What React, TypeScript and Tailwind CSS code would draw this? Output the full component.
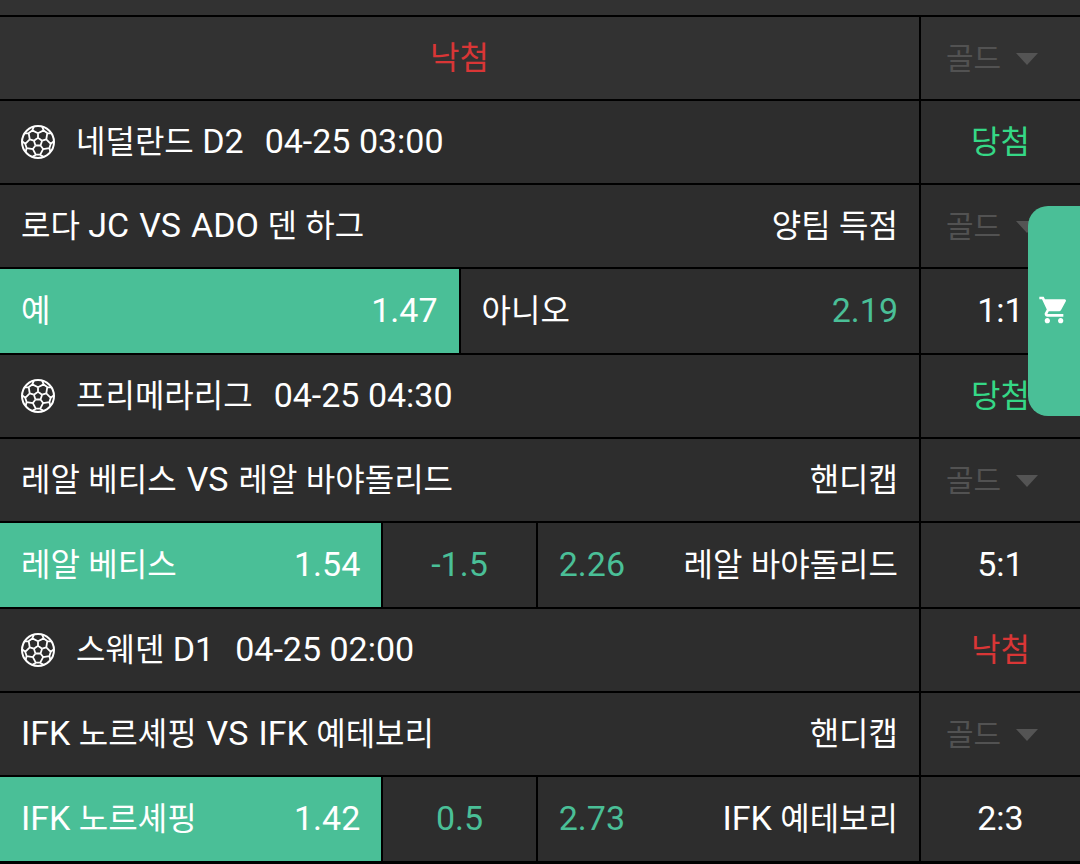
import React, { useState } from 'react';
import { MdShoppingCart } from 'react-icons/md';

interface Option {
  name?: string;
  odds: string;
}

interface Bet {
  id: number;
  league: string;
  date: string;
  won: boolean;
  home: string;
  away: string;
  market: string;
  options: Option[];
  score: string;
}

const bets: Bet[] = [
  {
    id: 1,
    league: '네덜란드 D2',
    date: '04-25 03:00',
    won: true,
    home: '로다 JC',
    away: 'ADO 덴 하그',
    market: '양팀 득점',
    options: [{ name: '예', odds: '1.47' }, { name: '아니오', odds: '2.19' }],
    score: '1:1',
  },
  {
    id: 2,
    league: '프리메라리그',
    date: '04-25 04:30',
    won: true,
    home: '레알 베티스',
    away: '레알 바야돌리드',
    market: '핸디캡',
    options: [{ name: '레알 베티스', odds: '1.54' }, { odds: '-1.5' }, { name: '레알 바야돌리드', odds: '2.26' }],
    score: '5:1',
  },
  {
    id: 3,
    league: '스웨덴 D1',
    date: '04-25 02:00',
    won: false,
    home: 'IFK 노르셰핑',
    away: 'IFK 예테보리',
    market: '핸디캡',
    options: [{ name: 'IFK 노르셰핑', odds: '1.42' }, { odds: '0.5' }, { name: 'IFK 예테보리', odds: '2.73' }],
    score: '2:3',
  },
];

// Hangul is set a little smaller than the Latin letters next to it
function Label({ text }: { text: string }) {
  const parts = text.split(/([가-힣]+)/).filter(Boolean);
  return (
    <span className="whitespace-pre">
      {parts.map((part, i) => (
        <span key={i} className={/[가-힣]/.test(part) ? 'text-[32px]' : ''}>{part}</span>
      ))}
    </span>
  );
}

function point(radius: number, degrees: number) {
  const a = ((degrees - 90) * Math.PI) / 180;
  return `${(18 + radius * Math.cos(a)).toFixed(2)} ${(18 + radius * Math.sin(a)).toFixed(2)}`;
}

// Central pentagon, a spoke from each corner and the seams round it
const seams = [0, 72, 144, 216, 288]
  .map(d => [
    `M${point(4.3, d)}L${point(4.3, d + 72)}`,
    `M${point(4.3, d)}L${point(8.7, d)}`,
    `M${point(16, d - 15)}L${point(12.9, d - 26)}L${point(8.7, d)}L${point(12.9, d + 26)}L${point(16, d + 15)}`,
    `M${point(12.9, d + 26)}L${point(12.9, d + 46)}`,
  ].join(''))
  .join('');

function SoccerBall() {
  return (
    <svg viewBox="0 0 36 36" className="size-9 shrink-0" fill="none" stroke="currentColor" aria-hidden="true">
      <circle cx="18" cy="18" r="16" strokeWidth="2" />
      <path d={seams} strokeWidth="1.8" strokeLinejoin="round" />
    </svg>
  );
}

function GoldSelect({ label }: { label: string }) {
  return (
    <div className="relative flex items-center pt-0.5 pl-[25px]">
      <select
        disabled
        aria-label={label}
        className="w-full appearance-none bg-transparent text-[30px] leading-10 text-[#525252] opacity-100"
      >
        <option>골드</option>
      </select>
      <svg viewBox="0 0 22 12" className="pointer-events-none absolute right-[42px] h-3 w-[22px] fill-[#545454]" aria-hidden="true">
        <path d="M0 0H22L11 12Z" />
      </svg>
    </div>
  );
}

function Result({ won }: { won: boolean }) {
  return (
    <span className={won ? 'text-[#35d886]' : 'text-[#d93636]'}>
      <Label text={won ? '당첨' : '낙첨'} />
    </span>
  );
}

function OptionButton({ option, selected, reverse, onClick }: {
  option: Option;
  selected: boolean;
  reverse: boolean;
  onClick: () => void;
}) {
  return (
    <button
      onClick={onClick}
      aria-pressed={selected}
      className={`flex h-21 items-center px-[21px] pb-0.5 ${option.name ? 'justify-between' : 'justify-center'} ${
        reverse ? 'flex-row-reverse' : ''
      } ${selected ? 'bg-[#4abf97]' : 'bg-[#2d2d2d]'}`}
    >
      {option.name && <Label text={option.name} />}
      <span className={selected ? '' : 'text-[#4abf97]'}>{option.odds}</span>
    </button>
  );
}

function BetRows({ bet }: { bet: Bet }) {
  const [selected, setSelected] = useState(0);

  return (
    <section className="flex flex-col gap-0.5">
      <div className="grid h-[82px] grid-cols-[1fr_159px] gap-0.5">
        <div className="flex items-center gap-5 bg-[#2d2d2d] px-5">
          <SoccerBall />
          <h2 className="flex items-baseline gap-[21px] pb-0.5">
            <Label text={bet.league} />
            <time>{bet.date}</time>
          </h2>
        </div>
        <div className="flex items-center justify-center bg-[#2d2d2d] pb-0.5">
          <Result won={bet.won} />
        </div>
      </div>
      <div className="grid h-[82px] grid-cols-[1fr_159px] gap-0.5">
        <div className="flex items-center justify-between bg-[#2d2d2d] px-[21px] pb-0.5">
          <div className="flex items-baseline gap-2.5">
            <Label text={bet.home} />
            <span>VS</span>
            <Label text={bet.away} />
          </div>
          <Label text={bet.market} />
        </div>
        <div className="grid bg-[#2d2d2d]">
          <GoldSelect label={`${bet.home} VS ${bet.away}`} />
        </div>
      </div>
      <div className="grid grid-cols-[1fr_159px] gap-0.5">
        <div className={`grid gap-0.5 ${bet.options.length === 3 ? 'grid-cols-[5fr_2fr_5fr]' : 'grid-cols-2'}`}>
          {bet.options.map((option, i) => (
            <OptionButton
              key={i}
              option={option}
              selected={selected === i}
              reverse={i === 2}
              onClick={() => setSelected(i)}
            />
          ))}
        </div>
        <div className="flex items-center justify-center bg-[#2d2d2d] pb-0.5">{bet.score}</div>
      </div>
    </section>
  );
}

export default function App() {
  return (
    <main
      lang="ko"
      className="flex min-h-screen flex-col gap-0.5 bg-black font-[Roboto,'Noto_Sans_CJK_KR',sans-serif] text-[34px] leading-12 text-white"
    >
      <div className="h-[15px] bg-[#323232]" />
      <div className="grid h-[82px] grid-cols-[1fr_159px] gap-0.5">
        <div className="flex items-center justify-center bg-[#323232] pb-0.5">
          <Result won={false} />
        </div>
        <div className="grid bg-[#323232]">
          <GoldSelect label="전체" />
        </div>
      </div>
      {bets.map(bet => (
        <BetRows key={bet.id} bet={bet} />
      ))}
      <button
        aria-label="장바구니"
        className="fixed top-[206px] right-0 flex h-[210px] w-13 items-center justify-center rounded-l-[20px] bg-[#4abf97] pb-0.5"
      >
        <MdShoppingCart className="size-8" />
      </button>
    </main>
  );
}
